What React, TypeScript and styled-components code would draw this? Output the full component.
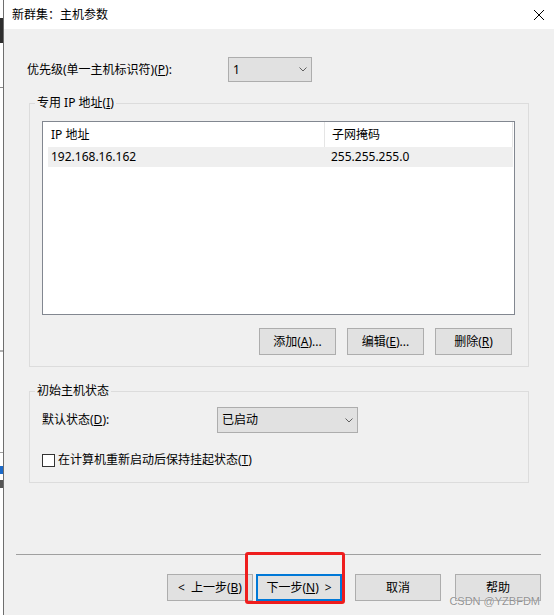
import React from "react";
import styled, { createGlobalStyle } from "styled-components";

const GlobalStyle = createGlobalStyle`
  html, body {
    margin: 0;
    padding: 0;
    width: 554px;
    height: 615px;
    overflow: hidden;
    background: #ffffff;
  }
  body {
    font-family: "Noto Sans", "Noto Sans CJK SC", sans-serif;
    font-size: 12px;
    color: #000000;
  }
  * { box-sizing: border-box; }
`;

const Screen = styled.div`
  position: relative;
  display: flex;
  width: 554px;
  height: 615px;
`;

const BackStrip = styled.div`
  width: 3px;
  flex: none;
  display: flex;
  flex-direction: column;
  background: #ffffff;
`;

const StripMark = styled.div<{ $h: number; $c: string; $mt: number }>`
  height: ${(p) => p.$h}px;
  margin-top: ${(p) => p.$mt}px;
  background: ${(p) => p.$c};
  flex: none;
`;

const Dialog = styled.div`
  flex: 1;
  display: flex;
  flex-direction: column;
  border-left: 1px solid #6e6e6e;
  background: #f0f0f0;
  min-width: 0;
`;

const TitleBar = styled.div`
  height: 29px;
  flex: none;
  background: #ffffff;
  display: flex;
  align-items: center;
  justify-content: space-between;
  padding: 0 10px 0 8px;
  line-height: 16px;
`;

const CloseIcon = styled.svg`
  width: 10px;
  height: 10px;
  display: block;
`;

const Body = styled.div`
  flex: 1;
  display: flex;
  flex-direction: column;
  padding: 0 25px;
`;

const FieldRow = styled.div<{ $cols: string; $mt: number; $ml: number; $h: number }>`
  display: grid;
  grid-template-columns: ${(p) => p.$cols};
  align-items: center;
  height: ${(p) => p.$h}px;
  margin-top: ${(p) => p.$mt}px;
  margin-left: ${(p) => p.$ml}px;
  line-height: 16px;
`;

const Combo = styled.div<{ $w: number; $h: number }>`
  width: ${(p) => p.$w}px;
  height: ${(p) => p.$h}px;
  background: #e1e1e1;
  border: 1px solid #adadad;
  display: flex;
  align-items: center;
  justify-content: space-between;
  padding: 0 4px;
  line-height: 16px;
`;

const Chevron = styled.svg`
  width: 8px;
  height: 5px;
  display: block;
`;

const Mn = styled.span`
  text-decoration: underline;
  text-underline-offset: 1px;
`;

const Group = styled.fieldset<{ $mt: number; $pt: number; $pb: number }>`
  margin: ${(p) => p.$mt}px 0 0;
  padding: ${(p) => p.$pt}px 13px ${(p) => p.$pb}px 12px;
  border: 1px solid #dcdcdc;
  min-width: 0;
`;

const Legend = styled.legend`
  padding: 0 2px;
  margin-left: -7px;
  line-height: 14px;
  font-size: 12px;
`;

const ListView = styled.div`
  height: 194px;
  background: #ffffff;
  border: 1px solid #828790;
  padding: 0 1px 0 5px;
  display: flex;
  flex-direction: column;
`;

const ListLine = styled.div<{ $h: number; $selected?: boolean }>`
  display: grid;
  grid-template-columns: 276px 1fr;
  height: ${(p) => p.$h}px;
  align-items: stretch;
  background: ${(p) => (p.$selected ? "#efefef" : "#ffffff")};
  line-height: 16px;
`;

const Cell = styled.div<{ $first?: boolean; $header?: boolean }>`
  display: flex;
  align-items: center;
  padding-left: ${(p) => (p.$first ? 3 : 7)}px;
  border-left: ${(p) => (p.$header && !p.$first ? "1px solid #e5e5e5" : "none")};
  border-right: ${(p) => (p.$header && !p.$first ? "1px solid #e5e5e5" : "none")};
  white-space: nowrap;
`;

const ButtonRow = styled.div<{ $mt: number; $pr: number }>`
  display: flex;
  justify-content: flex-end;
  margin-top: ${(p) => p.$mt}px;
  padding-right: ${(p) => p.$pr}px;
`;

const Button = styled.button<{ $w: number; $ml: number; $default?: boolean }>`
  width: ${(p) => p.$w}px;
  height: 27px;
  margin: 0 0 0 ${(p) => p.$ml}px;
  padding: 0;
  background: #e1e1e1;
  border: ${(p) => (p.$default ? "2px solid #0078d7" : "1px solid #adadad")};
  font: inherit;
  font-size: 12px;
  line-height: 16px;
  color: #000000;
  display: flex;
  align-items: center;
  justify-content: center;
  white-space: pre;
`;

const Arrow = styled.span<{ $side: "left" | "right" }>`
  margin-${(p) => (p.$side === "left" ? "right" : "left")}: 6px;
`;

const CheckRow = styled.label`
  display: flex;
  align-items: center;
  gap: 3px;
  height: 16px;
  margin-top: 19px;
  line-height: 16px;
`;

const CheckBox = styled.span`
  width: 13px;
  height: 13px;
  flex: none;
  background: #ffffff;
  border: 1px solid #333333;
`;

const Footer = styled.div`
  flex: none;
  display: flex;
  flex-direction: column;
  padding-bottom: 14px;
`;

const Separator = styled.div`
  height: 1px;
  margin: 0 13px 0 12px;
  background: #a0a0a0;
`;

const Annotation = styled.div`
  position: absolute;
  left: 245px;
  top: 552px;
  width: 100px;
  height: 52px;
  border: 3px solid #ee1d1d;
  border-radius: 3px;
  pointer-events: none;
`;

const Watermark = styled.div`
  position: absolute;
  right: 14px;
  bottom: 8px;
  font-family: "Liberation Sans", sans-serif;
  font-size: 11px;
  line-height: 12px;
  color: rgba(110, 110, 110, 0.75);
  text-shadow: 0 0 1px #ffffff;
  pointer-events: none;
`;

const ChevronGlyph = () => (
  <Chevron viewBox="0 0 8 5">
    <polyline points="0.5,0.5 4,4 7.5,0.5" fill="none" stroke="#606060" strokeWidth="1" />
  </Chevron>
);

export default function App() {
  return (
    <>
      <GlobalStyle />
      <Screen>
        <BackStrip>
          <StripMark $h={25} $c="#2e2e2e" $mt={18} />
          <StripMark $h={1} $c="#8a8a8a" $mt={44} />
          <StripMark $h={2} $c="#b0b0b0" $mt={262} />
          <StripMark $h={1} $c="#a0a0a0" $mt={100} />
          <StripMark $h={8} $c="#1b6ac9" $mt={13} />
          <StripMark $h={8} $c="#555555" $mt={6} />
        </BackStrip>
        <Dialog>
          <TitleBar>
            <span>新群集：主机参数</span>
            <CloseIcon viewBox="0 0 10 10">
              <line x1="0" y1="0" x2="10" y2="10" stroke="#000" strokeWidth="1" />
              <line x1="10" y1="0" x2="0" y2="10" stroke="#000" strokeWidth="1" />
            </CloseIcon>
          </TitleBar>
          <Body>
            <FieldRow $cols="201px 84px" $mt={28} $ml={-2} $h={25}>
              <span>
                优先级(单一主机标识符)(<Mn>P</Mn>):
              </span>
              <Combo $w={84} $h={25}>
                <span>1</span>
                <ChevronGlyph />
              </Combo>
            </FieldRow>

            <Group $mt={14} $pt={11} $pb={11}>
              <Legend>
                专用 IP 地址(<Mn>I</Mn>)
              </Legend>
              <ListView>
                <ListLine $h={25}>
                  <Cell $first $header>IP 地址</Cell>
                  <Cell $header>子网掩码</Cell>
                </ListLine>
                <ListLine $h={20} $selected>
                  <Cell $first>192.168.16.162</Cell>
                  <Cell>255.255.255.0</Cell>
                </ListLine>
              </ListView>
              <ButtonRow $mt={13} $pr={3}>
                <Button $w={77} $ml={0}>
                  添加(<Mn>A</Mn>)...
                </Button>
                <Button $w={77} $ml={11}>
                  编辑(<Mn>E</Mn>)...
                </Button>
                <Button $w={77} $ml={11}>
                  删除(<Mn>R</Mn>)
                </Button>
              </ButtonRow>
            </Group>

            <Group $mt={17} $pt={9} $pb={14}>
              <Legend>初始主机状态</Legend>
              <FieldRow $cols="175px 141px" $mt={0} $ml={0} $h={26}>
                <span>
                  默认状态(<Mn>D</Mn>):
                </span>
                <Combo $w={141} $h={26}>
                  <span>已启动</span>
                  <ChevronGlyph />
                </Combo>
              </FieldRow>
              <CheckRow>
                <CheckBox />
                <span>
                  在计算机重新启动后保持挂起状态(<Mn>T</Mn>)
                </span>
              </CheckRow>
            </Group>
          </Body>
          <Footer>
            <Separator />
            <ButtonRow $mt={19} $pr={13}>
              <Button $w={86} $ml={0}>
                <Arrow $side="left">&lt;</Arrow>
                上一步(<Mn>B</Mn>)
              </Button>
              <Button $w={86} $ml={3} $default>
                下一步(<Mn>N</Mn>)
                <Arrow $side="right">&gt;</Arrow>
              </Button>
              <Button $w={86} $ml={13}>
                取消
              </Button>
              <Button $w={86} $ml={14}>
                帮助
              </Button>
            </ButtonRow>
          </Footer>
        </Dialog>
        <Annotation />
        <Watermark>CSDN @YZBFDM</Watermark>
      </Screen>
    </>
  );
}
